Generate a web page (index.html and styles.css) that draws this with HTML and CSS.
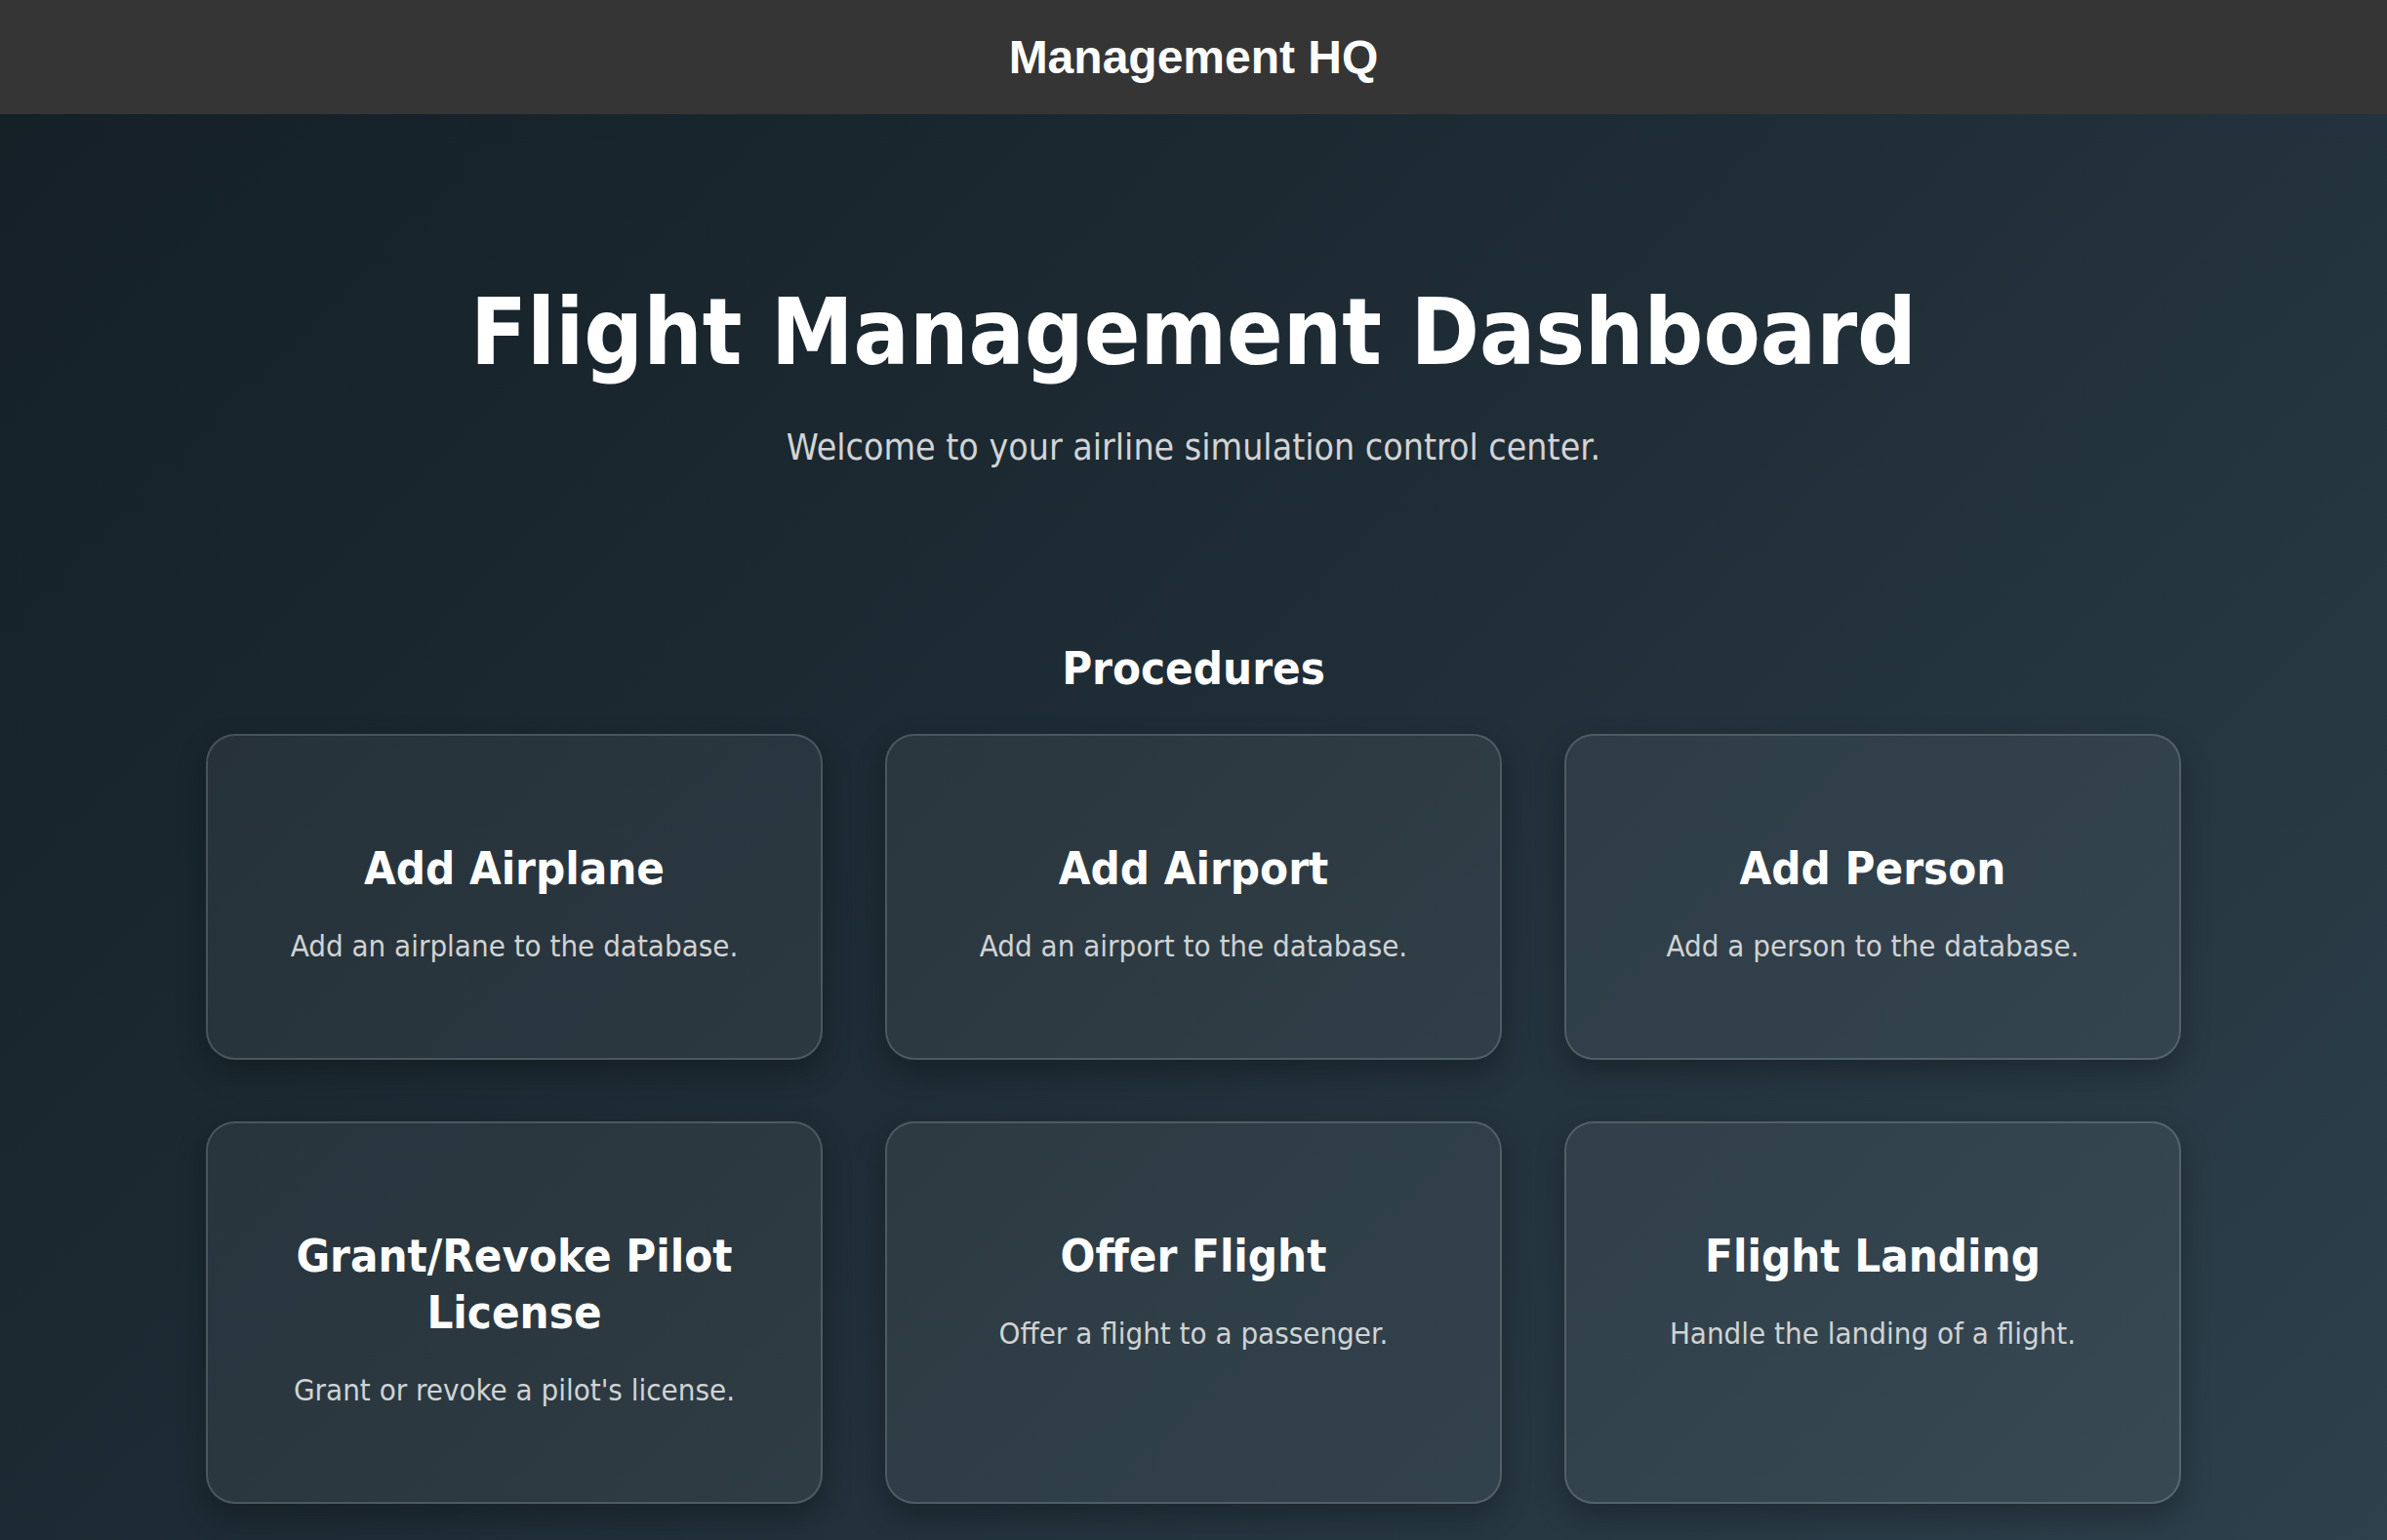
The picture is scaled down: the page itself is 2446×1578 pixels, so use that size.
FILE: index.html
```html
<!DOCTYPE html>
<html lang="en">
<head>
<meta charset="utf-8">
<title>Management HQ</title>
<link rel="stylesheet" href="styles.css">
</head>
<body>
<header class="topbar">
  <h1 class="topbar-title">Management HQ</h1>
</header>
<main class="main">
  <section class="hero">
    <h1 class="hero-title">Flight Management Dashboard</h1>
    <p class="hero-sub">Welcome to your airline simulation control center.</p>
  </section>
  <section class="procedures">
    <h2 class="section-title">Procedures</h2>
    <div class="grid">
      <a class="card" href="#">
        <h3 class="card-title">Add Airplane</h3>
        <p class="card-desc">Add an airplane to the database.</p>
      </a>
      <a class="card" href="#">
        <h3 class="card-title">Add Airport</h3>
        <p class="card-desc">Add an airport to the database.</p>
      </a>
      <a class="card" href="#">
        <h3 class="card-title">Add Person</h3>
        <p class="card-desc">Add a person to the database.</p>
      </a>
      <a class="card" href="#">
        <h3 class="card-title">Grant/Revoke Pilot License</h3>
        <p class="card-desc">Grant or revoke a pilot's license.</p>
      </a>
      <a class="card" href="#">
        <h3 class="card-title">Offer Flight</h3>
        <p class="card-desc">Offer a flight to a passenger.</p>
      </a>
      <a class="card" href="#">
        <h3 class="card-title">Flight Landing</h3>
        <p class="card-desc">Handle the landing of a flight.</p>
      </a>
    </div>
  </section>
</main>
</body>
</html>
```

FILE: styles.css
```css
* {
  box-sizing: border-box;
}

html, body {
  margin: 0;
  padding: 0;
}

body {
  min-height: 100vh;
  font-family: "DejaVu Sans Condensed", "DejaVu Sans", sans-serif;
  color: #ffffff;
  background: linear-gradient(135deg, #141f26 0%, #1f2d36 50%, #2d404c 100%);
  background-attachment: fixed;
}

.topbar {
  background: #353535;
  padding: 32px 0;
  text-align: center;
}

.topbar-title {
  margin: 0;
  font-family: "Liberation Sans", Arial, sans-serif;
  font-weight: 700;
  font-size: 48px;
  line-height: 53px;
  color: #ffffff;
}

.main {
  display: flex;
  flex-direction: column;
  align-items: center;
  padding-top: 168px;
}

.hero {
  text-align: center;
}

.hero-title {
  margin: 0;
  font-size: 94.5px;
  line-height: 110px;
  font-weight: 700;
}

.hero-sub {
  margin: 42px 0 0;
  font-size: 37.2px;
  line-height: 42px;
  color: #d2d4d6;
}

.procedures {
  margin-top: 178px;
  width: 2024px;
  text-align: center;
}

.section-title {
  margin: 0 0 39px;
  font-size: 47px;
  line-height: 56px;
  font-weight: 700;
}

.grid {
  display: grid;
  grid-template-columns: repeat(3, 1fr);
  gap: 63px 64px;
}

.card {
  display: block;
  text-decoration: none;
  color: inherit;
  padding: 107px 40px 97px;
  border: 2px solid rgba(255, 255, 255, 0.16);
  border-radius: 30px;
  background: rgba(255, 255, 255, 0.06);
  box-shadow: 0 12px 30px rgba(0, 0, 0, 0.28);
}

.card-title {
  margin: 0 0 32px;
  font-size: 47px;
  line-height: 58px;
  font-weight: 700;
  color: #ffffff;
}

.card-desc {
  margin: 0;
  font-size: 31px;
  line-height: 36px;
  color: #d0d3d5;
}
```
